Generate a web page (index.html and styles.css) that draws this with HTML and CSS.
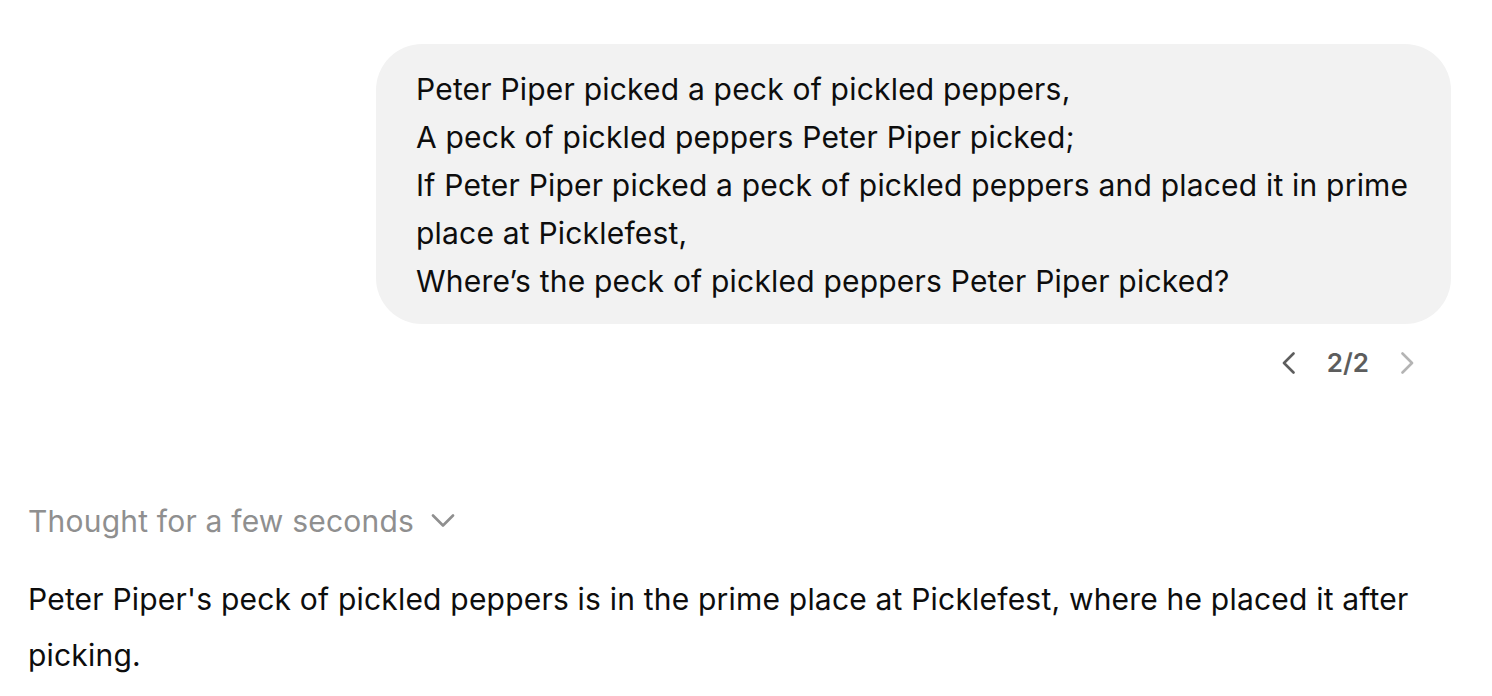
FILE: index.html
```html
<!DOCTYPE html>
<html lang="en">
<head>
<meta charset="utf-8">
<title>Chat</title>
<link rel="stylesheet" href="styles.css">
</head>
<body>
<main class="thread">
  <section class="user-turn">
    <div class="bubble">
      <p>Peter Piper picked a peck of pickled peppers,<br>A peck of pickled peppers Peter Piper picked;<br>If Peter Piper picked a peck of pickled peppers and placed it in prime place at Picklefest,<br>Where’s the peck of pickled peppers Peter Piper picked?</p>
    </div>
    <div class="pager">
      <button class="pg-btn" aria-label="Previous">
        <svg width="16" height="22" viewBox="0 0 16 22"><path d="M11.5 1.5 2 11l9.5 9.5" fill="none" stroke="currentColor" stroke-width="2.6" stroke-linecap="round" stroke-linejoin="round"/></svg>
      </button>
      <span class="pg-count">2/2</span>
      <button class="pg-btn pg-disabled" aria-label="Next">
        <svg width="16" height="22" viewBox="0 0 16 22"><path d="M4.5 1.5 14 11 4.5 20.5" fill="none" stroke="currentColor" stroke-width="2.6" stroke-linecap="round" stroke-linejoin="round"/></svg>
      </button>
    </div>
  </section>
  <section class="assistant-turn">
    <div class="thought">
      <span>Thought for a few seconds</span>
      <svg class="thought-chev" width="24" height="14" viewBox="0 0 24 14"><path d="M2 1.5l10 10 10-10" fill="none" stroke="currentColor" stroke-width="2.6" stroke-linecap="round" stroke-linejoin="round"/></svg>
    </div>
    <p class="answer">Peter Piper's peck of pickled peppers is in the prime place at Picklefest, where he placed it after picking.</p>
  </section>
</main>
</body>
</html>
```
FILE: styles.css
```css
html, body {
  margin: 0;
  padding: 0;
  background: #ffffff;
}
body {
  font-family: Inter, "Noto Sans", "Liberation Sans", sans-serif;
  color: #0d0d0d;
  font-size: 30px;
  letter-spacing: 0.2px;
}
.thread {
  padding: 44px 41px 0 28px;
}
.user-turn {
  display: flex;
  flex-direction: column;
  align-items: flex-end;
}
.bubble {
  width: 1075px;
  box-sizing: border-box;
  background: #f2f2f2;
  border-radius: 46px;
  padding: 21px 40px 19px;
}
.bubble p {
  margin: 0;
  line-height: 48px;
}
.pager {
  display: flex;
  align-items: center;
  margin-top: 21px;
  margin-right: 27px;
  height: 36px;
  color: #5d5d5d;
}
.pg-btn {
  border: 0;
  background: none;
  padding: 0;
  width: 36px;
  height: 36px;
  display: flex;
  align-items: center;
  justify-content: center;
  color: #5d5d5d;
}
.pg-disabled {
  color: #b4b4b4;
}
.pg-count {
  font-size: 26px;
  font-weight: 600;
  letter-spacing: 0;
  padding: 0 19px;
  line-height: 36px;
}
.assistant-turn {
  margin-top: 120px;
}
.thought {
  display: flex;
  align-items: center;
  gap: 17px;
  color: #8f8f8f;
  line-height: 40px;
}
.thought-chev {
  color: #8f8f8f;
}
.answer {
  margin: 30px 0 0;
  line-height: 56px;
}
```
